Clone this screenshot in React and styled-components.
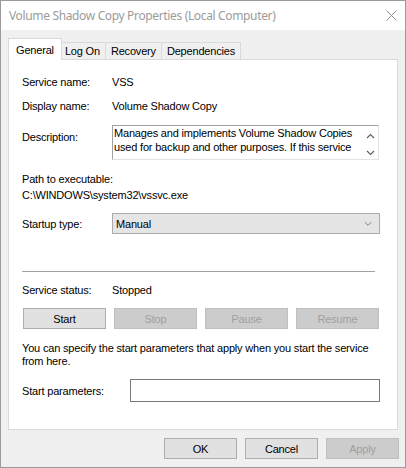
import React from 'react';
import styled, { createGlobalStyle } from 'styled-components';

const GlobalStyle = createGlobalStyle`
  html, body {
    margin: 0;
    padding: 0;
    background: #ffffff;
  }
  body {
    font-family: "Liberation Sans", Arial, sans-serif;
    font-size: 11px;
    letter-spacing: -0.18px;
    color: #000;
  }
  * { box-sizing: border-box; }
`

const Window = styled.div`
    width: 406px;
    height: 468px;
    border: 1px solid #9a9a9a;
    background: #f0f0f0;
    display: flex;
    flex-direction: column;
`

const TitleBar = styled.div`
    height: 29px;
    background: #ffffff;
    display: flex;
    align-items: center;
    padding-left: 8px;
    font-family: "Noto Sans", "Liberation Sans", sans-serif;
    font-size: 12px;
    letter-spacing: -0.35px;
    color: #9b9b9b;
`

const Title = styled.div`
    flex: 1;
    white-space: nowrap;
`

const CloseBox = styled.div`
    width: 28px;
    height: 29px;
    display: flex;
    align-items: center;
    justify-content: center;
`

const TabRow = styled.div`
    margin-top: 8px;
    height: 21px;
    padding-left: 9px;
    display: flex;
    align-items: flex-end;
    position: relative;
    z-index: 1;
`

const Tab = styled.div`
    height: ${props => props.active ? '22px' : '17px'};
    margin: ${props => props.active ? '0 -2px -1px -2px' : '0 0 0 -1px'};
    padding: 0 ${props => props.active ? '7px' : '5px'};
    background: ${props => props.active ? '#ffffff' : '#f0f0f0'};
    border: 1px solid #d9d9d9;
    border-bottom: none;
    display: flex;
    align-items: center;
    white-space: nowrap;
    position: relative;
    z-index: ${props => props.active ? 2 : 1};
    &:first-child { margin-left: ${props => props.active ? '-2px' : '0'}; }
`

const Panel = styled.div`
    margin: 0 7px 0 7px;
    height: 371px;
    background: #ffffff;
    border: 1px solid #d9d9d9;
    padding: 0 17px 0 13px;
    display: flex;
    flex-direction: column;
`

const Row = styled.div`
    display: flex;
    align-items: ${props => props.top ? 'flex-start' : 'center'};
    margin-top: ${props => props.mt}px;
    line-height: 14px;
`

const Label = styled.div`
    width: ${props => props.w || 90}px;
    flex-shrink: 0;
    margin-top: ${props => props.mt || 0}px;
`

const Line = styled.div`
    margin-top: ${props => props.mt}px;
    line-height: 14px;
    white-space: nowrap;
`

const DescBox = styled.div`
    flex: 1;
    height: 35px;
    margin-right: 1px;
    border: 1px solid #a0a0a0;
    border-right-color: #e3e3e3;
    border-bottom-color: #e3e3e3;
    display: flex;
`

const DescText = styled.div`
    flex: 1;
    padding-left: 1px;
    line-height: 14px;
`

const ScrollCol = styled.div`
    width: 16px;
    display: flex;
    flex-direction: column;
    align-items: center;
    justify-content: space-between;
    padding: 7px 0 3px;
`

const Select = styled.div`
    flex: 1;
    height: 21px;
    background: #e5e5e5;
    border: 1px solid #acacac;
    display: flex;
    align-items: center;
    justify-content: space-between;
    padding: 0 7px 0 3px;
`

const Separator = styled.div`
    margin-top: 37px;
    width: 353px;
    height: 1px;
    background: #a0a0a0;
`

const ButtonRow = styled.div`
    margin: 11px 1px 0 1px;
    display: grid;
    grid-template-columns: repeat(4, 1fr);
    gap: 8px;
`

const Button = styled.div`
    height: 21px;
    width: ${props => props.w ? props.w + 'px' : 'auto'};
    background: ${props => props.disabled ? '#cccccc' : '#e1e1e1'};
    border: 1px solid ${props => props.disabled ? '#bfbfbf' : '#adadad'};
    color: ${props => props.disabled ? '#a0a0a0' : '#000'};
    display: flex;
    align-items: center;
    justify-content: center;
`

const Paragraph = styled.div`
    margin-top: 13px;
    line-height: 13px;
`

const Input = styled.div`
    flex: 1;
    height: 23px;
    background: #ffffff;
    border: 1px solid #7a7a7a;
`

const Footer = styled.div`
    display: flex;
    justify-content: flex-end;
    gap: 8px;
    padding: 8px 6px 0 0;
`

const Chevron = ({ up, small }) => (
    <svg width={small ? 8 : 9} height="6" viewBox="0 0 9 6">
        <path d={up ? 'M1 5 L4.5 1.5 L8 5' : 'M1 1 L4.5 4.5 L8 1'} fill="none" stroke={small ? '#707070' : '#606060'} strokeWidth={small ? 1 : 1.2} />
    </svg>
)

function App() {
    return (
        <>
            <GlobalStyle />
            <Window>
                <TitleBar>
                    <Title>Volume Shadow Copy Properties (Local Computer)</Title>
                    <CloseBox>
                        <svg width="11" height="11" viewBox="0 0 11 11">
                            <path d="M0.5 0.5 L10.5 10.5 M10.5 0.5 L0.5 10.5" stroke="#8a8a8a" strokeWidth="1" />
                        </svg>
                    </CloseBox>
                </TitleBar>
                <TabRow>
                    <Tab active>General</Tab>
                    <Tab>Log On</Tab>
                    <Tab>Recovery</Tab>
                    <Tab>Dependencies</Tab>
                </TabRow>
                <Panel>
                    <Row mt={15}><Label>Service name:</Label>VSS</Row>
                    <Row mt={10}><Label>Display name:</Label>Volume Shadow Copy</Row>
                    <Row mt={12} top>
                        <Label mt={5}>Description:</Label>
                        <DescBox>
                            <DescText>
                                Manages and implements Volume Shadow Copies used for backup and other purposes. If this service
                            </DescText>
                            <ScrollCol>
                                <Chevron up />
                                <Chevron />
                            </ScrollCol>
                        </DescBox>
                    </Row>
                    <Line mt={12}>Path to executable:</Line>
                    <Line mt={2}>C:\WINDOWS\system32\vssvc.exe</Line>
                    <Row mt={11}>
                        <Label>Startup type:</Label>
                        <Select>
                            Manual
                            <Chevron small />
                        </Select>
                    </Row>
                    <Separator />
                    <Row mt={11}><Label>Service status:</Label>Stopped</Row>
                    <ButtonRow>
                        <Button>Start</Button>
                        <Button disabled>Stop</Button>
                        <Button disabled>Pause</Button>
                        <Button disabled>Resume</Button>
                    </ButtonRow>
                    <Paragraph>
                        You can specify the start parameters that apply when you start the service from here.
                    </Paragraph>
                    <Row mt={11}>
                        <Label w={108}>Start parameters:</Label>
                        <Input />
                    </Row>
                </Panel>
                <Footer>
                    <Button w={73}>OK</Button>
                    <Button w={73}>Cancel</Button>
                    <Button w={73} disabled>Apply</Button>
                </Footer>
            </Window>
        </>
    );
}

export default App;
